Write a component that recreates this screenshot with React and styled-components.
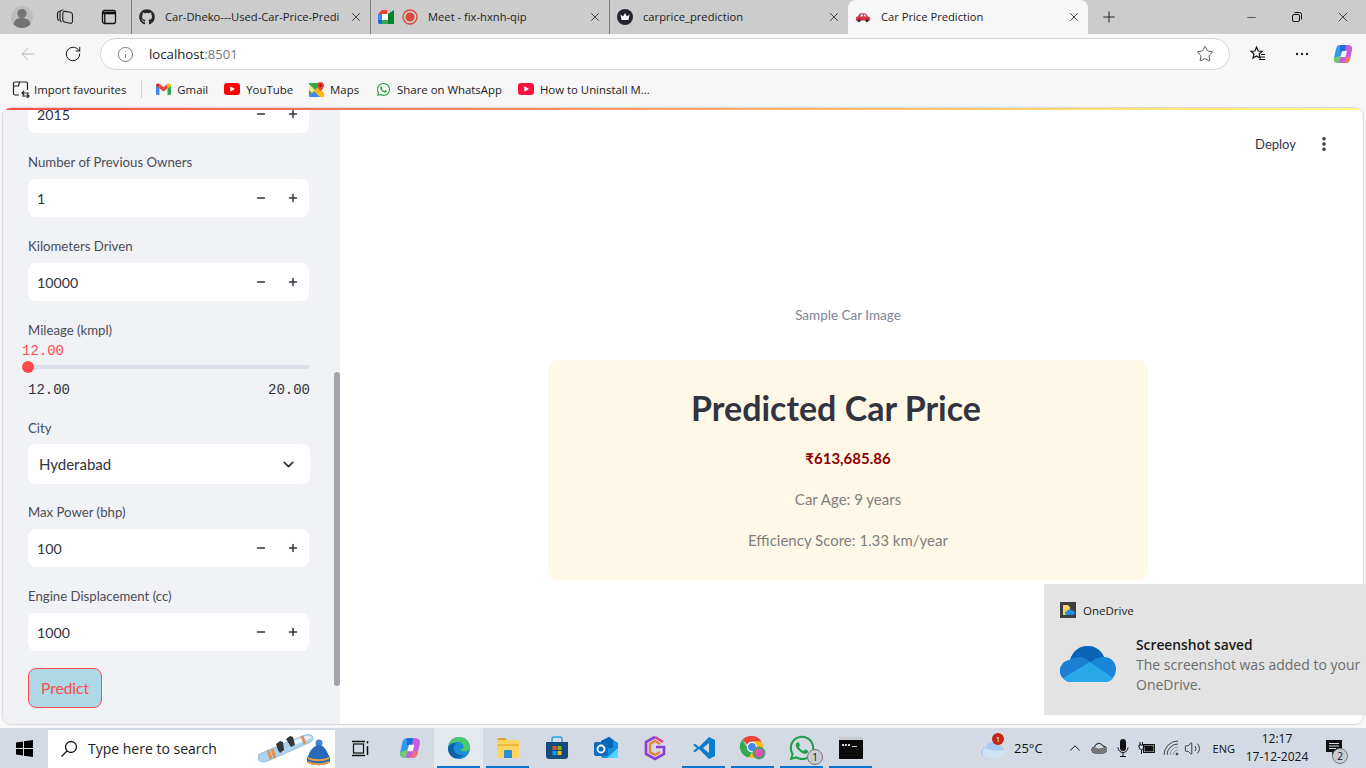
import React from 'react';
import styled, { createGlobalStyle } from 'styled-components';
import { ArrowLeft, ChevronDown, ChevronUp, Info, Minus, MoreVertical, Plus, RotateCw, Star, Volume2, X } from 'lucide-react';
import { FaGithub, FaWhatsapp } from 'react-icons/fa';

const UI_FONT = '"Open Sans", "Noto Sans", sans-serif';
const APP_FONT = 'Lato, "Noto Sans", sans-serif';

const GlobalStyle = createGlobalStyle`
    html, body {
        margin: 0;
        padding: 0;
        background: #f7f7f7;
    }
    * {
        box-sizing: border-box;
    }
`;

// browser chrome

const Screen = styled.div`
    position: relative;
    width: 1366px;
    height: 768px;
    overflow: hidden;
    display: flex;
    flex-direction: column;
    background: #f7f7f7;
    font-family: ${UI_FONT};
`;

const TabStrip = styled.div`
    height: 34px;
    flex-shrink: 0;
    display: flex;
    align-items: center;
    background: #cccccc;
    color: #1b1b1b;
`;

const StripButton = styled.div`
    width: ${(p) => p.$w}px;
    height: 34px;
    flex-shrink: 0;
    display: flex;
    align-items: center;
    justify-content: center;
`;

const Tab = styled.div`
    width: ${(p) => p.$w || 239}px;
    height: 34px;
    flex-shrink: 0;
    display: flex;
    align-items: center;
    padding: 0 7px 1px 7px;
    gap: 8px;
    border-left: ${(p) => (p.$active || p.$noSep ? 'none' : '1px solid #7f7f7f')};
    background-clip: padding-box;
    background: ${(p) => (p.$active ? '#f7f7f7' : 'transparent')};
    border-radius: ${(p) => (p.$active ? '8px 8px 0 0' : '0')};
`;

const TabTitle = styled.div`
    flex: 1;
    min-width: 0;
    margin-left: 2px;
    font-size: 11.2px;
    white-space: nowrap;
    overflow: hidden;
    color: #222;
`;

const WindowControls = styled.div`
    margin-left: auto;
    display: flex;
    align-items: center;
`;

const Toolbar = styled.div`
    height: 38px;
    flex-shrink: 0;
    display: flex;
    align-items: center;
    padding-top: 2px;
    background: #f7f7f7;
`;

const AddressBar = styled.div`
    width: 1130px;
    height: 32px;
    margin-left: 9px;
    flex-shrink: 0;
    display: flex;
    align-items: center;
    padding: 0 15px 0 16px;
    background: #fff;
    border: 1px solid #d6d6d6;
    border-radius: 16px;
`;

const Url = styled.div`
    flex: 1;
    margin-left: 15px;
    font-size: 13.2px;
    color: #1a1a1a;
    span {
        color: #767676;
    }
`;

const Bookmarks = styled.div`
    height: 36px;
    flex-shrink: 0;
    display: flex;
    align-items: center;
    padding: 0 0 2px 12px;
    background: #f7f7f7;
`;

const Bookmark = styled.div`
    display: flex;
    align-items: center;
    gap: ${(p) => p.$iconGap || 6}px;
    margin-right: ${(p) => p.$gap}px;
    font-size: 11.4px;
    color: #1a1a1a;
    white-space: nowrap;
`;

const BookmarkDivider = styled.div`
    width: 1px;
    height: 18px;
    margin-right: 14px;
    background: #cfcfcf;
`;

// the streamlit page

const Page = styled.div`
    position: relative;
    height: 616px;
    flex-shrink: 0;
    margin: 0 3px;
    display: flex;
    background: #fff;
    border-radius: 8px;
    box-shadow: 0 0 1px 1px #d8d8d8;
    overflow: hidden;
`;

const Decoration = styled.div`
    position: absolute;
    top: 0;
    left: 0;
    right: 0;
    height: 2px;
    z-index: 2;
    background: linear-gradient(90deg, #ff4b4b, #fffd80);
`;

const Sidebar = styled.div`
    position: relative;
    width: 337px;
    height: 100%;
    flex-shrink: 0;
    display: flex;
    flex-direction: column;
    justify-content: flex-end;
    padding: 0 30px 16px 25px;
    background: #f0f2f6;
    overflow: hidden;
    font-family: ${APP_FONT};
`;

const ScrollThumb = styled.div`
    position: absolute;
    top: 264px;
    right: 0;
    width: 6px;
    height: 314px;
    border-radius: 3px;
    background: #a4a4ac;
`;

const Field = styled.div`
    flex-shrink: 0;
    margin-bottom: ${(p) => (p.$last ? 17 : 19)}px;
`;

const Label = styled.div`
    height: 20px;
    margin-bottom: ${(p) => (p.$flush ? 0 : 7)}px;
    font-size: 13.2px;
    line-height: 20px;
    color: #4a4c57;
    white-space: nowrap;
`;

const NumberBox = styled.div`
    width: 281px;
    height: 38px;
    display: flex;
    align-items: center;
    padding: 0 0 0 9px;
    background: #fff;
    border-radius: 8px;
    font-size: 14.2px;
    color: #31333f;
`;

const NumberValue = styled.div`
    flex: 1;
`;

const StepButton = styled.div`
    width: 32px;
    display: flex;
    justify-content: center;
    color: #31333f;
`;

const SliderValue = styled.div`
    height: 20px;
    margin-left: -6px;
    font-family: "Liberation Mono", monospace;
    font-size: 14px;
    line-height: 22px;
    color: #ff4b4b;
`;

const SliderTrack = styled.div`
    position: relative;
    height: 4px;
    margin: 5px 0;
    border-radius: 2px;
    background: #dde0ea;
`;

const SliderThumb = styled.div`
    position: absolute;
    left: -6px;
    top: -4px;
    width: 12px;
    height: 12px;
    border-radius: 50%;
    background: #ff4b4b;
`;

const SliderRange = styled.div`
    display: flex;
    justify-content: space-between;
    margin-top: 10px;
    height: 20px;
    font-family: "Liberation Mono", monospace;
    font-size: 14px;
    line-height: 22px;
    color: #31333f;
`;

const SelectBox = styled.div`
    height: 40px;
    margin: -1px 0;
    display: flex;
    align-items: center;
    justify-content: space-between;
    padding: 0 13px 0 11px;
    background: #fff;
    border-radius: 8px;
    font-size: 15px;
    color: #31333f;
`;

const PredictButton = styled.div`
    width: 74px;
    height: 40px;
    flex-shrink: 0;
    display: flex;
    align-items: center;
    justify-content: center;
    background: #add8e6;
    border: 1px solid #ff4b4b;
    border-radius: 8px;
    font-size: 15.5px;
    color: #ff4b4b;
`;

const Main = styled.div`
    flex: 1;
    min-width: 0;
    display: flex;
    flex-direction: column;
    font-family: ${APP_FONT};
`;

const Header = styled.div`
    height: 72px;
    flex-shrink: 0;
    display: flex;
    align-items: center;
    justify-content: flex-end;
    gap: 19px;
    padding-right: 30px;
    font-size: 13px;
    color: #31333f;
`;

const Column = styled.div`
    width: 600px;
    margin: 125px 0 0 208px;
`;

const Caption = styled.div`
    height: 20px;
    font-size: 13.5px;
    line-height: 20px;
    text-align: center;
    color: #808495;
`;

const ResultCard = styled.div`
    height: 220px;
    margin-top: 35px;
    padding-top: 24px;
    background: #fff8e7;
    border-radius: 10px;
    text-align: center;
`;

const CardTitle = styled.div`
    height: 48px;
    padding-right: 24px;
    font-size: 34px;
    line-height: 48px;
    font-weight: 700;
    color: #31333f;
`;

const Price = styled.div`
    height: 24px;
    margin-top: 14px;
    font-size: 15px;
    line-height: 24px;
    font-weight: 700;
    color: #8b0000;
`;

const Stat = styled.div`
    height: 24px;
    margin-top: ${(p) => p.$gap}px;
    font-size: 15px;
    line-height: 24px;
    color: #808080;
`;

// screenshot toast

const Toast = styled.div`
    position: absolute;
    left: 1044px;
    top: 584px;
    width: 322px;
    height: 131px;
    padding: 18px 0 0 16px;
    background: #e3e3e3;
    z-index: 5;
`;

const ToastApp = styled.div`
    display: flex;
    align-items: center;
    gap: 7px;
    font-size: 11.5px;
    color: #1a1a1a;
`;

const ToastBody = styled.div`
    display: flex;
    margin-top: 17px;
`;

const ToastCloud = styled.div`
    width: 76px;
    padding-top: 11px;
    flex-shrink: 0;
`;

const ToastTitle = styled.div`
    font-size: 13.8px;
    line-height: 20px;
    font-weight: 600;
    color: #1a1a1a;
`;

const ToastText = styled.div`
    font-size: 14px;
    line-height: 20px;
    color: #6d6d6d;
    white-space: nowrap;
`;

// taskbar

const Taskbar = styled.div`
    position: relative;
    height: 40px;
    margin-top: 4px;
    flex-shrink: 0;
    display: flex;
    align-items: center;
    background: #d3dae3;
`;

const StartButton = styled.div`
    width: 48px;
    height: 40px;
    flex-shrink: 0;
    display: flex;
    align-items: center;
    justify-content: center;
`;

const SearchBox = styled.div`
    width: 287px;
    height: 38px;
    margin-top: 1px;
    flex-shrink: 0;
    display: flex;
    align-items: center;
    padding: 0 2px 0 12px;
    gap: 10px;
    background: #fff;
    font-size: 14px;
    color: #222;
`;

const SearchText = styled.div`
    flex: 1;
`;

const TaskButton = styled.div`
    position: relative;
    width: ${(p) => p.$w || 49}px;
    height: 40px;
    flex-shrink: 0;
    display: flex;
    align-items: center;
    justify-content: center;
    background: ${(p) => (p.$active ? '#e4e9ef' : 'transparent')};
    &::after {
        content: '';
        display: ${(p) => (p.$open ? 'block' : 'none')};
        position: absolute;
        left: 3px;
        right: 3px;
        bottom: 0;
        height: 2px;
        background: #0a74d1;
    }
`;

const CountBadge = styled.div`
    position: absolute;
    right: ${(p) => p.$right}px;
    bottom: ${(p) => p.$bottom}px;
    width: 16px;
    height: 16px;
    display: flex;
    align-items: center;
    justify-content: center;
    border-radius: 50%;
    border: 1px solid #777;
    background: #c9ccd0;
    font-size: 10px;
    color: #111;
`;

const Tray = styled.div`
    margin-left: auto;
    display: flex;
    align-items: center;
    color: #111;
`;

const Weather = styled.div`
    position: relative;
    display: flex;
    align-items: center;
    gap: 7px;
    margin-right: 20px;
    font-size: 13px;
`;

const WeatherBadge = styled.div`
    position: absolute;
    left: 11px;
    top: -4px;
    width: 12px;
    height: 12px;
    border-radius: 50%;
    background: #c4281c;
    color: #fff;
    font-size: 8px;
    line-height: 12px;
    text-align: center;
`;

const TrayIcon = styled.div`
    width: ${(p) => p.$w || 24}px;
    display: flex;
    justify-content: center;
`;

const Lang = styled.div`
    margin-left: 10px;
    font-size: 11px;
`;

const Clock = styled.div`
    width: 80px;
    margin-left: 2px;
    font-size: 12px;
    line-height: 18px;
    text-align: center;
`;

const NotifyButton = styled.div`
    position: relative;
    width: 49px;
    padding-left: 8px;
    display: flex;
    justify-content: flex-start;
`;

// drawings

const Avatar = () => (
    <svg width="22" height="26" viewBox="0 0 22 26">
        <circle cx="11" cy="13" r="11" fill="#bcbcbc" />
        <circle cx="11" cy="9.5" r="4.6" fill="#747474" />
        <path d="M2.500 20c1-4.500 4.500-6 8.500-6s7.500 1.500 8.500 6c-2 2.500-5 4-8.500 4s-6.500-1.500-8.500-4z" fill="#747474" />
    </svg>
);

const WorkspacesIcon = () => (
    <svg width="18" height="18" viewBox="0 0 18 18" fill="none" stroke="#222" strokeWidth="1.100">
        <path d="M3 12.500c-1-.5-1.500-1.200-1.500-2.300V6c0-2 1.500-3 3-3" />
        <path d="M5.500 14c-1-.5-1.500-1.200-1.500-2.300V5c0-2 1.500-3 3.500-3" />
        <path d="M6.800 5.500c0-1.500 1-2.300 2.500-2.100l5 .9c1.200.2 2.200 1.200 2.200 2.500v6.500c0 1.400-1 2.200-2.400 2l-4.800-1c-1.500-.3-2.500-1.300-2.500-2.800z" />
    </svg>
);

const VerticalTabsIcon = () => (
    <svg width="16" height="16" viewBox="0 0 16 16" fill="none" stroke="#111" strokeWidth="1.300">
        <rect x="1.500" y="1.500" width="13" height="13" rx="2" />
        <path d="M1.500 4h13" strokeWidth="2.600" />
        <path d="M3.800 4v10.500" />
    </svg>
);

const MeetIcon = () => (
    <svg width="16" height="14" viewBox="0 0 16 14">
        <path d="M4 0h6v4H0z" fill="#ea4335" />
        <path d="M0 4h4v6H0z" fill="#4285f4" />
        <path d="M0 10h4v4H2a2 2 0 0 1-2-2z" fill="#1967d2" />
        <path d="M4 4h6v6H4z" fill="#fff" />
        <path d="M4 10h6v4H4z" fill="#34a853" />
        <path d="M10 0v14l6 0V0l-6 4z" fill="#00832d" />
        <path d="M9 0h1v4H9z" fill="#fbbc04" />
    </svg>
);

const RecordIcon = () => (
    <svg width="16" height="16" viewBox="0 0 16 16">
        <circle cx="8" cy="8" r="7" fill="none" stroke="#d9473c" strokeWidth="1.300" />
        <circle cx="8" cy="8" r="4.500" fill="#d9473c" />
    </svg>
);

const CrownIcon = () => (
    <svg width="16" height="16" viewBox="0 0 16 16">
        <circle cx="8" cy="8" r="8" fill="#22252e" />
        <path d="M3.500 5.500 6 7.500 8 4l2 3.500 2.500-2-1 5.500h-7z" fill="#fff" />
    </svg>
);

const CarIcon = () => (
    <svg width="16" height="16" viewBox="0 0 18 18">
        <path d="M1 13v-2.500c0-1 .8-1.700 2-2l2-3c.4-.5.900-.8 1.500-.8h4.500c.700 0 1.200.3 1.600.8l2 3c1.500.2 2.400 1 2.400 2V13z" fill="#d9303e" />
        <path d="M5.500 8.500 7 6h2v2.500zM10 6h1.500l1.500 2.500h-3z" fill="#bfe3f5" />
        <circle cx="4.500" cy="13" r="1.800" fill="#333" />
        <circle cx="13.500" cy="13" r="1.800" fill="#333" />
    </svg>
);

const RestoreIcon = () => (
    <svg width="12" height="12" viewBox="0 0 12 12" fill="none" stroke="#111">
        <rect x="1.500" y="3.500" width="7" height="7" rx="1.500" />
        <path d="M3.500 1.500h5a2 2 0 0 1 2 2v5" />
    </svg>
);

const FavoritesIcon = () => (
    <svg width="18" height="18" viewBox="0 0 18 18" fill="none" stroke="#111" strokeWidth="1.200">
        <path d="M7.500 2 9.200 6l4 .3-3 2.700 1 4L7.500 11 4 13l1-4-3-2.700 4-.3z" />
        <path d="M12 9.500h4M11.500 12h4.500M10 14.500h6" />
    </svg>
);

const CopilotIcon = ({ size = 22 }) => (
    <svg width={size} height={size} viewBox="0 0 22 22">
        <path d="M8 2h5c1 0 1.500.6 1.800 1.500L10 20H6c-3 0-4.500-2-4-5L4 6c.5-2.500 2-4 4-4z" fill="#2f9cf0" />
        <path d="M2 15c-.4 3 1 5 4 5h2c1.500 0 2.300-.8 2.600-2L12 13H7z" fill="#6fce6a" />
        <path d="M8 2h5c1 0 1.500.6 1.800 1.500L13 9H8z" fill="#1b6fd6" />
        <path d="M14 2h2c3 0 4.500 2 4 5l-2 9c-.5 2.500-2 4-4 4H9c-1 0-1.500-.6-1.800-1.500L9 13l3-1z" fill="#c85ce0" />
        <path d="M9 20h5c2 0 3.500-1.500 4-4l.5-2H14l-1 4c-.300 1-1.500 2-4 2z" fill="#f0756a" />
        <path d="M10 8h5l-1.500 6h-5z" fill="#f7f7f7" />
    </svg>
);

const ImportIcon = () => (
    <svg width="18" height="18" viewBox="0 0 18 18" fill="none" stroke="#222" strokeWidth="1.200">
        <path d="M7 15H3a1.500 1.500 0 0 1-1.500-1.500v-10A1.500 1.500 0 0 1 3 2h11a1.500 1.500 0 0 1 1.500 1.500V10" />
        <path d="M1.500 6h5l1-4" />
        <path d="M10 13h7M12 11l-2 2 2 2M10 16h7M15 14l2 2-2 2" />
    </svg>
);

const GmailIcon = () => (
    <svg width="15" height="12" viewBox="0 0 15 12">
        <path d="M0 2.500V11a1 1 0 0 0 1 1h2.500V5.500z" fill="#4285f4" />
        <path d="M15 2.500V11a1 1 0 0 1-1 1h-2.500V5.500z" fill="#34a853" />
        <path d="M3.500 5.500 7.500 8.500l4-3V1l-4 3-4-3z" fill="#ea4335" />
        <path d="M0 2.500C0 .8 2 0 3.500 1v4.500z" fill="#c5221f" />
        <path d="M15 2.500c0-1.700-2-2.500-3.500-1.500v4.500z" fill="#fbbc04" />
    </svg>
);

const YoutubeIcon = ({ color = '#f00' }) => (
    <svg width="16" height="12" viewBox="0 0 16 12">
        <rect width="16" height="12" rx="3" fill={color} />
        <path d="M6.300 3.300 11 6l-4.700 2.700z" fill="#fff" />
    </svg>
);

const MapsIcon = () => (
    <svg width="15" height="15" viewBox="0 0 15 15">
        <path d="M0 1h9v14H1a1 1 0 0 1-1-1z" fill="#34a853" />
        <path d="M0 14 9 5l6 6v3a1 1 0 0 1-1 1H1z" fill="#fbbc04" />
        <path d="M0 14 5 9l6 6H1z" fill="#4285f4" />
        <path d="M0 2 6 8 3 11 0 8z" fill="#fde293" />
        <path d="M11.500 0C9.500 0 8 1.500 8 3.400 8 6 11.500 9 11.500 9S15 6 15 3.400C15 1.500 13.500 0 11.500 0z" fill="#ea4335" />
        <circle cx="11.500" cy="3.400" r="1.300" fill="#a50e0e" />
    </svg>
);

const WindowsLogo = () => (
    <svg width="17" height="17" viewBox="0 0 17 17" fill="#000">
        <path d="M0 2.400 7 1.400v6.600H0zM8 1.300 17 0v8H8zM0 9h7v6.600l-7-1zM8 9h9v8l-9-1.300z" />
    </svg>
);

const SearchGlyph = () => (
    <svg width="18" height="18" viewBox="0 0 18 18" fill="none" stroke="#111" strokeWidth="1.300">
        <circle cx="11" cy="7" r="5.500" />
        <path d="M7 11 1.500 16.500" />
    </svg>
);

const SearchDoodle = () => (
    <svg width="75" height="38" viewBox="0 0 75 38">
        <path d="M1 24 44 6c5-2 10-2 11 1 .8 2.500-1 4.500-4 6L10 31c-5 2-9 1-9.800-2-.3-2 0-4 .8-5z" fill="#a9d3f0" stroke="#7d9db6" strokeWidth=".5" />
        <path d="M30 13 44 7c4-1.500 9-1.500 10 .5L33 17z" fill="#e6f2fb" />
        <path d="M10 20l3 9M14 19l3 9M44 6l3 8" stroke="#e6904a" strokeWidth="3" />
        <path d="M18 14l4-3 3 1 1 8-4 3-2-3zM28 9l4-3 3 1 2 8-4 2-2-3z" fill="#33363b" />
        <circle cx="61" cy="13" r="3.500" fill="#3f86d6" />
        <path d="M50 33c-2-2-1-6 1-9 2-5 6-9 10-9s7 4 9 9c2 3 3 7 1 9-6 3-15 3-21 0z" fill="#2a68b8" />
        <path d="M50 27c6 3 15 3 21 0v2c-6 3-15 3-21 0z" fill="#e9a23f" />
        <path d="M50 31c6 3 15 3 21 0v2c-6 3-15 3-21 0z" fill="#e9a23f" />
    </svg>
);

const TaskViewIcon = () => (
    <svg width="17" height="17" viewBox="0 0 17 17" fill="none" stroke="#111" strokeWidth="1.200">
        <rect x="1.500" y="4" width="10" height="9" />
        <path d="M0 1.500h13M0 15.500h13M15.500 1v2.500M15.500 6v9" strokeWidth="1.500" />
    </svg>
);

const EdgeIcon = () => (
    <svg width="24" height="24" viewBox="0 0 24 24">
        <circle cx="12" cy="12" r="11" fill="#1a8fd8" />
        <path d="M1 12C2 5 7 1 12 1c6 0 11 4.500 11 10 0 3-2.500 4.500-5.500 4.500-2 0-4-.8-4.500-2 3 0 3.500-1.500 3.500-2.500C16.500 8 14 6 11 6 6 6 2 8 1 12z" fill="#4cc96b" />
        <path d="M1 12c1-3 4-5 7.500-5 2 0 .5 1-.5 2-2 2-2 5 0 7.500 2 2 5 3 8.500 2.500-1.500 2-4 3-6.500 3C5 23 1 18 1 12z" fill="#0d5fa8" />
    </svg>
);

const FolderIcon = () => (
    <svg width="24" height="22" viewBox="0 0 24 22">
        <path d="M1 3a2 2 0 0 1 2-2h6l2 2h-10z" fill="#e0a526" />
        <rect x="1" y="3" width="22" height="18" rx="2" fill="#ffd45c" />
        <path d="M1 7h22v2H1z" fill="#f0b93a" />
        <path d="M8 21v-7a1 1 0 0 1 1-1h6a1 1 0 0 1 1 1v7z" fill="#2c8fd6" />
    </svg>
);

const StoreIcon = () => (
    <svg width="24" height="24" viewBox="0 0 24 24">
        <path d="M7 6V3a2 2 0 0 1 2-2h6a2 2 0 0 1 2 2v3" fill="none" stroke="#2aa5dd" strokeWidth="1.500" />
        <path d="M1 6h22v14a3 3 0 0 1-3 3H4a3 3 0 0 1-3-3z" fill="#144a7c" />
        <rect x="7.500" y="10" width="4" height="4" fill="#f25022" />
        <rect x="12.500" y="10" width="4" height="4" fill="#7fba00" />
        <rect x="7.500" y="15" width="4" height="4" fill="#00a4ef" />
        <rect x="12.500" y="15" width="4" height="4" fill="#ffb900" />
    </svg>
);

const OutlookIcon = () => (
    <svg width="24" height="24" viewBox="0 0 24 24">
        <path d="M7 5l8-4 9 6v13a2 2 0 0 1-2 2H9a2 2 0 0 1-2-2z" fill="#1490df" />
        <path d="M7 5l8-4 4 3v8H7z" fill="#0364b8" />
        <path d="M13 22l11-10v8a2 2 0 0 1-2 2z" fill="#50d9ff" />
        <rect x="0" y="6" width="14" height="14" rx="2" fill="#0f6cbd" />
        <circle cx="7" cy="13" r="3.500" fill="none" stroke="#fff" strokeWidth="1.800" />
    </svg>
);

const HexIcon = () => (
    <svg width="22" height="26" viewBox="0 0 22 26" fill="none" strokeWidth="2.600">
        <path d="M11 2 2 7v12l9 5 9-5v-7h-8" stroke="#8a3fd1" />
        <path d="M19 7 11 2" stroke="#e1408f" />
        <path d="M16 9l-5-3-5 3v8l5 3 5-3" stroke="#e8873c" />
    </svg>
);

const VscodeIcon = () => (
    <svg width="24" height="24" viewBox="0 0 24 24">
        <path d="M17 1 7 11l-4-3.300L1 9l4 3-4 3 2 1.300L7 13l10 10 6-3V4z" fill="#0a7ecb" />
        <path d="M17 7v10l-6-5z" fill="#d3dae3" />
    </svg>
);

const ChromeIcon = () => (
    <svg width="28" height="28" viewBox="0 0 28 28">
        <path d="M13 2a11 11 0 0 1 9.500 5.500H13a5.500 5.500 0 0 0-5 3L3.500 5.500A11 11 0 0 1 13 2z" fill="#ea4335" />
        <path d="M3.500 5.500 8 13.500a5.500 5.500 0 0 0 5 5l-3 5A11 11 0 0 1 3.500 5.500z" fill="#34a853" />
        <path d="M22.500 7.500A11 11 0 0 1 10 23.500l5-8a5.500 5.500 0 0 0-2-8z" fill="#fbbc04" />
        <circle cx="13" cy="13" r="4.500" fill="#4285f4" stroke="#fff" strokeWidth="1.200" />
        <circle cx="20" cy="19" r="6.500" fill="#4f9a7c" />
        <circle cx="20" cy="19" r="4" fill="#e84fb0" />
    </svg>
);

const TerminalIcon = () => (
    <svg width="24" height="22" viewBox="0 0 24 22">
        <rect width="24" height="22" fill="#0c0c0c" />
        <rect width="24" height="3" fill="#c9ccd0" />
        <path d="M3 7h2v2H3zM6 7h2v2H6zM9 7h2v2H9zM13 9h5v1h-5z" fill="#d0d0d0" />
    </svg>
);

const WeatherCloud = () => (
    <svg width="26" height="22" viewBox="0 0 26 22">
        <path d="M6 21a5.500 5.500 0 0 1-1-11 7.500 7.500 0 0 1 14-1 6.500 6.500 0 0 1 1 12z" fill="#a9cdf0" />
        <path d="M6 21a5.500 5.500 0 0 1-2-10c6 3 14 3 20 2a6 6 0 0 1-4 8z" fill="#cfe3f7" />
    </svg>
);

const TrayCloud = () => (
    <svg width="16" height="12" viewBox="0 0 16 12" fill="none" stroke="#111">
        <path d="M4 11a3 3 0 0 1-.5-6A4.500 4.500 0 0 1 12 4a3.500 3.500 0 0 1 0 7z" />
        <path d="M4 11a3 3 0 0 1-.5-6c3 2 6 2 11-.5a3.500 3.500 0 0 1-2.500 6.500z" fill="#777" stroke="none" />
    </svg>
);

const MicIcon = () => (
    <svg width="12" height="18" viewBox="0 0 12 18" fill="#111">
        <rect x="3" y="0" width="6" height="12" rx="3" />
        <path d="M1 8.500a5 5 0 0 0 10 0M6 13.500V17M3 17.500h6" fill="none" stroke="#111" />
    </svg>
);

const PowerIcon = () => (
    <svg width="18" height="14" viewBox="0 0 18 14" fill="none" stroke="#111">
        <rect x="5.500" y="3.500" width="11" height="8" />
        <rect x="7" y="5" width="8" height="5" fill="#111" />
        <path d="M2 1v3M4.500 1v3M1 4h5v2a2.500 2.500 0 0 1-5 0zM3.500 9v4" />
    </svg>
);

const WifiIcon = () => (
    <svg width="16" height="16" viewBox="0 0 16 16" fill="none" stroke="#444">
        <path d="M1 15A14 14 0 0 1 15 1M4 15A11 11 0 0 1 15 4" />
        <path d="M7 15a8 8 0 0 1 8-8M10 15a5 5 0 0 1 5-5" stroke="#999" />
        <circle cx="14" cy="14" r="1" fill="#444" />
    </svg>
);

const NotifyIcon = () => (
    <svg width="18" height="16" viewBox="0 0 18 16">
        <path d="M1 0h16v12h-7l-3 4v-4H1z" fill="#111" />
        <path d="M4 3.500h10M4 6h10M4 8.500h7" stroke="#d3dae3" />
    </svg>
);

const ToastAppIcon = () => (
    <svg width="16" height="16" viewBox="0 0 16 16">
        <rect width="16" height="16" fill="#3f3f3f" />
        <path d="M3 3h5l2 2v8H3z" fill="#f6d16b" />
        <path d="M7 13a2 2 0 0 1 0-4 3 3 0 0 1 5-.5 2.300 2.300 0 0 1 1 4.500z" fill="#1e8fe0" />
    </svg>
);

const OneDriveCloud = () => (
    <svg width="56" height="38" viewBox="0 0 56 38">
        <path d="M12 36C5 36 0 31 0 25c0-6 4-10 10-11C13 5 19 0 28 0c7 0 13 4 16 11 7 0 12 5 12 12 0 7-5 13-12 13z" fill="#1a86d9" />
        <path d="M10 14C13 5 19 0 28 0c7 0 13 4 16 11-6 0-10 2-13 5L21 11c-4 0-8 1-11 3z" fill="#0a64b8" />
        <path d="M0 25c0-6 4-10 10-11 4-2 8-3 11-3l10 5-20 14-9 1c-1-2-2-4-2-6z" fill="#1b7fd4" />
        <path d="M3 32 30 16l23 16c-2 3-5 4-9 4H12c-4 0-7-1-9-4z" fill="#28a8ea" />
    </svg>
);

const Stepper = ({ value }) => (
    <NumberBox>
        <NumberValue>{value}</NumberValue>
        <StepButton>
            <Minus size={12} strokeWidth={3} />
        </StepButton>
        <StepButton>
            <Plus size={12} strokeWidth={3} />
        </StepButton>
    </NumberBox>
);

const NumberField = ({ label, value }) => (
    <Field>
        {label && <Label>{label}</Label>}
        <Stepper value={value} />
    </Field>
);

const tabClose = <X size={14} strokeWidth={1.4} color="#222" />;

const App = () => (
    <Screen>
        <GlobalStyle />
        <TabStrip>
            <StripButton $w={44}>
                <Avatar />
            </StripButton>
            <StripButton $w={42}>
                <WorkspacesIcon />
            </StripButton>
            <StripButton $w={45}>
                <VerticalTabsIcon />
            </StripButton>
            <Tab>
                <FaGithub size={16} color="#24292e" />
                <TabTitle>Car-Dheko---Used-Car-Price-Predi</TabTitle>
                {tabClose}
            </Tab>
            <Tab>
                <MeetIcon />
                <RecordIcon />
                <TabTitle>Meet - fix-hxnh-qip</TabTitle>
                {tabClose}
            </Tab>
            <Tab>
                <CrownIcon />
                <TabTitle>carprice_prediction</TabTitle>
                {tabClose}
            </Tab>
            <Tab $active $w={240}>
                <CarIcon />
                <TabTitle>Car Price Prediction</TabTitle>
                {tabClose}
            </Tab>
            <StripButton $w={42}>
                <Plus size={18} strokeWidth={1.2} color="#111" />
            </StripButton>
            <WindowControls>
                <StripButton $w={46}>
                    <Minus size={13} strokeWidth={1.2} color="#111" />
                </StripButton>
                <StripButton $w={46}>
                    <RestoreIcon />
                </StripButton>
                <StripButton $w={46}>
                    <X size={16} strokeWidth={1.1} color="#111" />
                </StripButton>
            </WindowControls>
        </TabStrip>

        <Toolbar>
            <StripButton $w={55}>
                <ArrowLeft size={20} strokeWidth={1.1} color="#b5b5b5" />
            </StripButton>
            <StripButton $w={36}>
                <RotateCw size={18} strokeWidth={1.3} color="#111" />
            </StripButton>
            <AddressBar>
                <Info size={17} strokeWidth={1.1} color="#555" />
                <Url>
                    localhost<span>:8501</span>
                </Url>
                <Star size={18} strokeWidth={1.1} color="#333" />
            </AddressBar>
            <StripButton $w={56}>
                <FavoritesIcon />
            </StripButton>
            <StripButton $w={32}>
                <svg width="14" height="4" viewBox="0 0 14 4" fill="#222">
                    <circle cx="2" cy="2" r="1.200" />
                    <circle cx="7" cy="2" r="1.200" />
                    <circle cx="12" cy="2" r="1.200" />
                </svg>
            </StripButton>
            <StripButton $w={50}>
                <CopilotIcon />
            </StripButton>
        </Toolbar>

        <Bookmarks>
            <Bookmark $gap={15} $iconGap={4}>
                <ImportIcon />
                Import favourites
            </Bookmark>
            <BookmarkDivider />
            <Bookmark $gap={16}>
                <GmailIcon />
                Gmail
            </Bookmark>
            <Bookmark $gap={16}>
                <YoutubeIcon />
                YouTube
            </Bookmark>
            <Bookmark $gap={17}>
                <MapsIcon />
                Maps
            </Bookmark>
            <Bookmark $gap={16}>
                <FaWhatsapp size={15} color="#25a244" />
                Share on WhatsApp
            </Bookmark>
            <Bookmark $gap={0}>
                <YoutubeIcon color="#ff0f3c" />
                How to Uninstall M...
            </Bookmark>
        </Bookmarks>

        <Page>
            <Decoration />
            <Sidebar>
                <NumberField value="2015" />
                <NumberField label="Number of Previous Owners" value="1" />
                <NumberField label="Kilometers Driven" value="10000" />
                <Field>
                    <Label $flush>Mileage (kmpl)</Label>
                    <SliderValue>12.00</SliderValue>
                    <SliderTrack>
                        <SliderThumb />
                    </SliderTrack>
                    <SliderRange>
                        <span>12.00</span>
                        <span>20.00</span>
                    </SliderRange>
                </Field>
                <Field>
                    <Label>City</Label>
                    <SelectBox>
                        Hyderabad
                        <ChevronDown size={17} strokeWidth={2.6} color="#31333f" />
                    </SelectBox>
                </Field>
                <NumberField label="Max Power (bhp)" value="100" />
                <Field $last>
                    <Label>Engine Displacement (cc)</Label>
                    <Stepper value="1000" />
                </Field>
                <PredictButton>Predict</PredictButton>
                <ScrollThumb />
            </Sidebar>
            <Main>
                <Header>
                    Deploy
                    <MoreVertical size={18} strokeWidth={2.6} color="#31333f" />
                </Header>
                <Column>
                    <Caption>Sample Car Image</Caption>
                    <ResultCard>
                        <CardTitle>Predicted Car Price</CardTitle>
                        <Price>₹613,685.86</Price>
                        <Stat $gap={17}>Car Age: 9 years</Stat>
                        <Stat $gap={17}>Efficiency Score: 1.33 km/year</Stat>
                    </ResultCard>
                </Column>
            </Main>
        </Page>

        <Taskbar>
            <StartButton>
                <WindowsLogo />
            </StartButton>
            <SearchBox>
                <SearchGlyph />
                <SearchText>Type here to search</SearchText>
                <SearchDoodle />
            </SearchBox>
            <TaskButton $w={50}>
                <TaskViewIcon />
            </TaskButton>
            <TaskButton>
                <CopilotIcon size={24} />
            </TaskButton>
            <TaskButton $active $open>
                <EdgeIcon />
            </TaskButton>
            <TaskButton $open>
                <FolderIcon />
            </TaskButton>
            <TaskButton>
                <StoreIcon />
            </TaskButton>
            <TaskButton>
                <OutlookIcon />
            </TaskButton>
            <TaskButton>
                <HexIcon />
            </TaskButton>
            <TaskButton $open>
                <VscodeIcon />
            </TaskButton>
            <TaskButton $open>
                <ChromeIcon />
            </TaskButton>
            <TaskButton $open>
                <FaWhatsapp size={28} color="#1f9e4a" />
                <CountBadge $right={3} $bottom={3}>1</CountBadge>
            </TaskButton>
            <TaskButton $open>
                <TerminalIcon />
            </TaskButton>
            <Tray>
                <Weather>
                    <WeatherCloud />
                    <WeatherBadge>1</WeatherBadge>
                    25°C
                </Weather>
                <TrayIcon>
                    <ChevronUp size={18} strokeWidth={1.3} />
                </TrayIcon>
                <TrayIcon>
                    <TrayCloud />
                </TrayIcon>
                <TrayIcon>
                    <MicIcon />
                </TrayIcon>
                <TrayIcon>
                    <PowerIcon />
                </TrayIcon>
                <TrayIcon>
                    <WifiIcon />
                </TrayIcon>
                <TrayIcon $w={20}>
                    <Volume2 size={17} strokeWidth={1.1} />
                </TrayIcon>
                <Lang>ENG</Lang>
                <Clock>
                    12:17
                    <br />
                    17-12-2024
                </Clock>
                <NotifyButton>
                    <NotifyIcon />
                    <CountBadge $right={18} $bottom={-8}>2</CountBadge>
                </NotifyButton>
            </Tray>
        </Taskbar>

        <Toast>
            <ToastApp>
                <ToastAppIcon />
                OneDrive
            </ToastApp>
            <ToastBody>
                <ToastCloud>
                    <OneDriveCloud />
                </ToastCloud>
                <div>
                    <ToastTitle>Screenshot saved</ToastTitle>
                    <ToastText>The screenshot was added to your</ToastText>
                    <ToastText>OneDrive.</ToastText>
                </div>
            </ToastBody>
        </Toast>
    </Screen>
);

export default App;
